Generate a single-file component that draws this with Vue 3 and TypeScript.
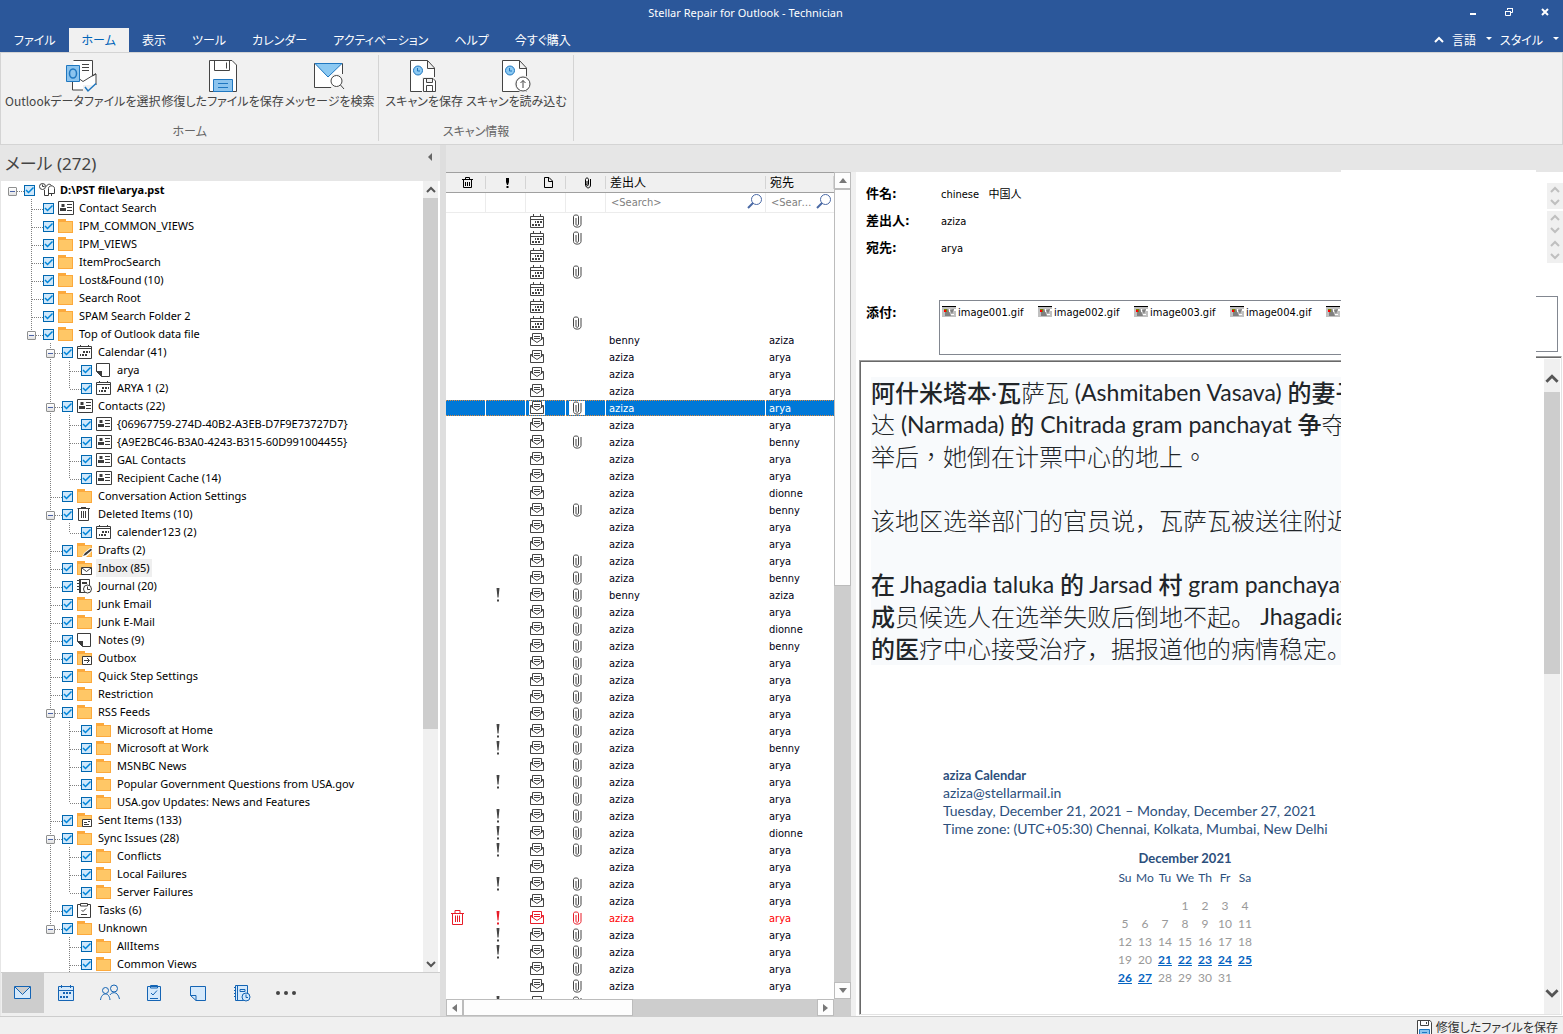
<script setup lang="ts">
import { ref } from 'vue'

interface TreeRow {
  depth: number
  icon: string
  label: string
  open?: boolean
  selected?: boolean
  more?: boolean
}

interface Mail {
  kind: 'cal' | 'env'
  from: string
  to: string
  clip: boolean
  bang: boolean
  deleted: boolean
}

interface Run {
  k: 'h' | 'l' | 't' | 'w'
  t: string
}

const tabs = ['ファイル', 'ホーム', '表示', 'ツール', 'カレンダー', 'アクティベーション', 'ヘルプ', '今すぐ購入']
const activeTab = ref('ホーム')

const groups = [
  {
    name: 'ホーム',
    actions: [
      { icon: 'r-outlook', label: 'Outlookデータファイルを選択' },
      { icon: 'r-floppy', label: '修復したファイルを保存' },
      { icon: 'r-search', label: 'メッセージを検索' },
    ],
  },
  {
    name: 'スキャン情報',
    actions: [
      { icon: 'r-scan-save', label: 'スキャンを保存' },
      { icon: 'r-scan-load', label: 'スキャンを読み込む' },
    ],
  },
]

const f = (depth: number, label: string, icon = 'folder', extra: Partial<TreeRow> = {}): TreeRow => ({
  depth,
  label,
  icon,
  ...extra,
})

const tree: TreeRow[] = [
  f(0, 'D:\\PST file\\arya.pst', 'pst', { open: true }),
  f(1, 'Contact Search', 'card'),
  f(1, 'IPM_COMMON_VIEWS'),
  f(1, 'IPM_VIEWS'),
  f(1, 'ItemProcSearch'),
  f(1, 'Lost&Found (10)'),
  f(1, 'Search Root'),
  f(1, 'SPAM Search Folder 2'),
  f(1, 'Top of Outlook data file', 'folder', { open: true }),
  f(2, 'Calendar (41)', 'calendar', { open: true }),
  f(3, 'arya', 'note'),
  f(3, 'ARYA 1 (2)', 'calendar'),
  f(2, 'Contacts (22)', 'card', { open: true }),
  f(3, '{06967759-274D-40B2-A3EB-D7F9E73727D7}', 'card'),
  f(3, '{A9E2BC46-B3A0-4243-B315-60D991004455}', 'card'),
  f(3, 'GAL Contacts', 'card'),
  f(3, 'Recipient Cache (14)', 'card'),
  f(2, 'Conversation Action Settings'),
  f(2, 'Deleted Items (10)', 'bin', { open: true }),
  f(3, 'calender123 (2)', 'calendar'),
  f(2, 'Drafts (2)', 'drafts'),
  f(2, 'Inbox (85)', 'inbox', { selected: true }),
  f(2, 'Journal (20)', 'journal'),
  f(2, 'Junk Email'),
  f(2, 'Junk E-Mail'),
  f(2, 'Notes (9)', 'note'),
  f(2, 'Outbox', 'outbox'),
  f(2, 'Quick Step Settings'),
  f(2, 'Restriction'),
  f(2, 'RSS Feeds', 'folder', { open: true }),
  f(3, 'Microsoft at Home'),
  f(3, 'Microsoft at Work'),
  f(3, 'MSNBC News'),
  f(3, 'Popular Government Questions from USA.gov'),
  f(3, 'USA.gov Updates: News and Features'),
  f(2, 'Sent Items (133)', 'sent'),
  f(2, 'Sync Issues (28)', 'folder', { open: true }),
  f(3, 'Conflicts'),
  f(3, 'Local Failures'),
  f(3, 'Server Failures'),
  f(2, 'Tasks (6)', 'task'),
  f(2, 'Unknown', 'folder', { open: true }),
  f(3, 'AllItems'),
  f(3, 'Common Views', 'folder', { more: true }),
]

// A guide line continues below row i at the given depth while a later sibling exists.
function continues(i: number, depth: number): boolean {
  for (let j = i + 1; j < tree.length; j++) {
    if (tree[j].depth < depth) return false
    if (tree[j].depth === depth) return true
  }
  return !!tree[i].more && tree[i].depth === depth
}

// Each entry: kind, marks (c = attachment, ! = important, d = deleted), sender, recipient.
const mailRows = `cal|c||
cal|c||
cal|||
cal|c||
cal|||
cal|||
cal|c||
env||benny|aziza
env||aziza|arya
env||aziza|arya
env||aziza|arya
env|c|aziza|arya
env||aziza|arya
env|c|aziza|benny
env||aziza|arya
env||aziza|arya
env||aziza|dionne
env|c|aziza|benny
env||aziza|arya
env||aziza|arya
env|c|aziza|arya
env|c|aziza|benny
env|!c|benny|aziza
env|c|aziza|arya
env|c|aziza|dionne
env|c|aziza|benny
env|c|aziza|arya
env|c|aziza|arya
env|c|aziza|arya
env|c|aziza|arya
env|!c|aziza|arya
env|!c|aziza|benny
env|c|aziza|arya
env|!c|aziza|arya
env|c|aziza|arya
env|!c|aziza|arya
env|!c|aziza|dionne
env|!c|aziza|arya
env||aziza|arya
env|!c|aziza|arya
env|c|aziza|arya
env|d!c|aziza|arya
env|!c|aziza|arya
env|!c|aziza|arya
env|c|aziza|arya
env|c|aziza|arya
env|!c||`

const mails: Mail[] = mailRows.split('\n').map((line) => {
  const [kind, marks, from, to] = line.split('|')
  return {
    kind: kind as Mail['kind'],
    from,
    to,
    clip: marks.includes('c'),
    bang: marks.includes('!'),
    deleted: marks.includes('d'),
  }
})
const selectedMail = ref(11)

const fields = [
  { label: '件名', value: 'chinese   中国人' },
  { label: '差出人', value: 'aziza' },
  { label: '宛先', value: 'arya' },
]
const attachments = ['image001.gif', 'image002.gif', 'image003.gif', 'image004.gif', '']

// h = heavy Han, l = light Han, t = light Han with centred punctuation, w = Latin
const lines: Run[][] = [
  [
    { k: 'h', t: '阿什米塔本' },
    { k: 'w', t: '·' },
    { k: 'h', t: '瓦' },
    { k: 'l', t: '萨瓦' },
    { k: 'w', t: ' (Ashmitaben Vasava) ' },
    { k: 'h', t: '的妻子' },
  ],
  [
    { k: 'l', t: '达' },
    { k: 'w', t: ' (Narmada) ' },
    { k: 'h', t: '的' },
    { k: 'w', t: ' Chitrada gram panchayat ' },
    { k: 'h', t: '争' },
    { k: 'l', t: '夺' },
  ],
  [{ k: 't', t: '举后，她倒在计票中心的地上。' }],
  [],
  [{ k: 'l', t: '该地区选举部门的官员说，瓦萨瓦被送往附近' }],
  [],
  [
    { k: 'h', t: '在' },
    { k: 'w', t: ' Jhagadia taluka ' },
    { k: 'h', t: '的' },
    { k: 'w', t: ' Jarsad ' },
    { k: 'h', t: '村' },
    { k: 'w', t: ' gram panchayat' },
  ],
  [
    { k: 'h', t: '成' },
    { k: 'l', t: '员候选人在选举失败后倒地不起。' },
    { k: 'w', t: ' Jhagadia' },
  ],
  [
    { k: 'h', t: '的医' },
    { k: 'l', t: '疗中心接受治疗，据报道他的病情稳定。' },
  ],
]

const weekdays = ['Su', 'Mo', 'Tu', 'We', 'Th', 'Fr', 'Sa']
const weeks = Array.from({ length: 5 }, (_, w) =>
  Array.from({ length: 7 }, (_, d) => {
    const n = w * 7 + d - 2
    return n >= 1 && n <= 31 ? n : 0
  }),
)
const isLinked = (n: number) => n >= 21 && n <= 27

const views = [
  { icon: 'n-mail', label: 'メール' },
  { icon: 'n-cal', label: '予定表' },
  { icon: 'n-people', label: '連絡先' },
  { icon: 'n-task', label: 'タスク' },
  { icon: 'n-note', label: 'メモ' },
  { icon: 'n-journal', label: '履歴' },
  { icon: 'n-more', label: 'その他' },
]
const activeView = ref('n-mail')
</script>

<template>
  <div class="app">
    <svg class="sprite" aria-hidden="true">
      <symbol id="folder" viewBox="0 0 16 16">
        <path d="M0 2V1H8V3H15V15H0Z" fill="#fca93c" />
        <path d="M1 4H14V14H1Z" fill="#ffc766" />
      </symbol>
      <symbol id="pst" viewBox="0 0 16 16">
        <g fill="none" stroke="#3b3b3b">
          <circle cx="3.5" cy="4.5" r="3" />
          <path d="M3.5 2.500V4.500H5.500" />
          <path d="M5.500 8V13.500H9.500V6.500C9.500 3 15.500 3 15.500 6.500V11.500H9.500M7.500 4.500C8 2 11 1.500 12.500 3.500M12.500 11.500V14" />
        </g>
      </symbol>
      <symbol id="card" viewBox="0 0 16 16">
        <path d="M.5 1.500H15.500V14.500H.5Z" fill="#fff" stroke="#3b3b3b" />
        <path d="M3.500 4h3v3h-3zM2 8h6v3H2zM9 4h5v1H9zM9 7h5v1H9zM9 10h5v1H9z" fill="#3b3b3b" />
      </symbol>
      <symbol id="calendar" viewBox="0 0 16 16">
        <path d="M.5 2.500H14.500V14.500H.5Z" fill="#fff" stroke="#3b3b3b" />
        <path d="M0 4h15v1H0zM3 1h1v2H3zM11 1h1v2h-1zM6 7h2v2H6zM9 7h2v2H9zM12 7h1v2h-1zM3 10h1v2H3zM5 10h2v2H5zM8 10h2v2H8z" fill="#3b3b3b" />
      </symbol>
      <symbol id="note" viewBox="0 0 16 16">
        <path d="M.5 1.500H13.500V14.500H5.500L.5 9.500Z" fill="#fff" stroke="#3b3b3b" />
        <path d="M0 9H6V15Z" fill="#3b3b3b" />
      </symbol>
      <symbol id="bin" viewBox="0 0 16 16">
        <path d="M1.500 3V14.500H11.500V3M.5 2.500H13M4 1.500H9" fill="none" stroke="#3b3b3b" />
        <path d="M4.500 5V12M6.500 5V12M8.500 5V12" stroke="#3b3b3b" />
      </symbol>
      <symbol id="drafts" viewBox="0 0 16 16">
        <path d="M0 1H8V3H15V15H0Z" fill="#fca93c" /><path d="M1 4H14V14H1Z" fill="#ffc766" />
        <path d="M5 15L7 11L13 6L15 6V9L9 15Z" fill="#fff" />
        <path d="M6 14L8 11L14 6.500L15 8L9 13Z" fill="#3b3b3b" />
      </symbol>
      <symbol id="inbox" viewBox="0 0 16 16">
        <path d="M0 1H8V3H15V15H0Z" fill="#fca93c" /><path d="M1 4H14V14H1Z" fill="#ffc766" />
        <path d="M4.500 7.500H14.500V14.500H4.500Z" fill="#fff" stroke="#3b3b3b" />
        <path d="M5 8L9.500 11.500L14 8" fill="none" stroke="#3b3b3b" />
      </symbol>
      <symbol id="outbox" viewBox="0 0 16 16">
        <path d="M0 1H8V3H15V15H0Z" fill="#fca93c" /><path d="M1 4H14V14H1Z" fill="#ffc766" />
        <path d="M5.500 6.500H14.500V14.500H5.500Z" fill="#fff" stroke="#3b3b3b" />
        <path d="M7 10.500H12M10 8L12.500 10.500L10 13" fill="none" stroke="#3b3b3b" />
      </symbol>
      <symbol id="sent" viewBox="0 0 16 16">
        <path d="M0 1H8V3H15V15H0Z" fill="#fca93c" /><path d="M1 4H14V14H1Z" fill="#ffc766" />
        <path d="M5.500 7.500H14.500V14.500H5.500Z" fill="#fff" stroke="#3b3b3b" />
        <path d="M7 10h3v1H7zM7 12h5v1H7zM11 9h2v1h-2z" fill="#3b3b3b" />
      </symbol>
      <symbol id="journal" viewBox="0 0 16 16">
        <path d="M2.500 1.500H12.500V14.500H2.500Z" fill="#fff" stroke="#3b3b3b" />
        <path d="M0 2h2v1H0zM0 5h2v1H0zM0 8h2v1H0zM0 11h2v1H0zM5 4h5v2H5zM2 1h2v14H2z" fill="#3b3b3b" />
        <circle cx="10.500" cy="11" r="4" fill="#fff" stroke="#3b3b3b" />
        <path d="M10.500 8.500V11.500H13" fill="none" stroke="#3b3b3b" />
      </symbol>
      <symbol id="task" viewBox="0 0 16 16">
        <path d="M.5 2.500H13.500V15.500H.5Z" fill="#fff" stroke="#3b3b3b" />
        <path d="M3.500 1.500H10.500V4H3.500Z" fill="#fff" stroke="#3b3b3b" />
        <path d="M4.500 8L6 9.500L9 6.500M4 12.500H10" fill="none" stroke="#3b3b3b" />
      </symbol>

      <symbol id="m-cal" viewBox="0 0 14 14">
        <path d="M.5 2.500H13.500V13.500H.5ZM1 5.500H13M3.500 0V3M10.500 0V3" fill="none" stroke="currentColor" />
        <path d="M5 7h1v2H5zM7 7h2v2H7zM10 7h2v2h-2zM2 10h2v2H2zM5 10h2v2H5zM8 10h2v2H8z" fill="currentColor" />
      </symbol>
      <symbol id="m-env" viewBox="0 0 14 14">
        <path d="M2.500 4.500H.5V12.500H13.500V4.500H11.500M2.500 7V.5H11.500V7M.5 5L7 9.500L13.500 5" fill="none" stroke="currentColor" />
        <path d="M4 3.500H10M4 5.500H10" stroke="currentColor" />
      </symbol>
      <symbol id="m-clip" viewBox="0 0 9 14">
        <path d="M3 4V10.500C3 11.500 5.500 11.500 5.500 10.500V2.500C5.500 .5 .5 .5 .5 2.500V10.500C.5 14 8 14 8 10.500V2" fill="none" stroke="currentColor" />
      </symbol>
      <symbol id="m-bang" viewBox="0 0 4 14">
        <path d="M.5 0H3.500L2.500 9.500H1.500Z" fill="currentColor" /><path d="M1 11.500h2v2H1z" fill="currentColor" />
      </symbol>
      <symbol id="m-bin" viewBox="0 0 14 16">
        <path d="M1.500 3V14.500H11.500V3M0 3.500H13M4 3V.5H9V3" fill="none" stroke="currentColor" />
        <path d="M4.500 5.500V12M6.500 5.500V12M8.500 5.500V12" stroke="currentColor" />
      </symbol>
      <symbol id="h-bin" viewBox="0 0 12 12">
        <path d="M1.500 3V10.500H9.500V3M0 2.500H11M3.500 2V.5H7.500V2M3.500 5V9M5.500 5V9M7.500 5V9" fill="none" stroke="#000" />
      </symbol>
      <symbol id="h-bang" viewBox="0 0 12 12"><path d="M4 1h3v4l-1 3H5L4 5zM4.500 9h2v2h-2z" /></symbol>
      <symbol id="h-doc" viewBox="0 0 12 12">
        <path d="M2.500 .5H7L10.500 4V10.500H2.500ZM6.500 1V4.500H10" fill="none" stroke="#000" />
      </symbol>
      <symbol id="h-clip" viewBox="0 0 12 12">
        <path d="M5 4V8M3.500 8V2.500C3.500 .5 6.500 .5 6.500 2.500V7.500C6.500 9 4.500 9 4.500 7.500M3.500 7C3.500 12 8.500 12 8.500 8V2" fill="none" stroke="#000" />
      </symbol>
      <symbol id="lens" viewBox="0 0 16 16">
        <circle cx="9.500" cy="5.500" r="5" fill="none" stroke="#4a69a5" />
        <path d="M6 9L1 14" stroke="#4a69a5" stroke-width="2" />
      </symbol>
      <symbol id="gif" viewBox="0 0 14 11">
        <path d="M0 0h14v11H0z" fill="#c0c0c0" /><path d="M0 0h14v1H0z" />
        <path d="M3 4L6 3L9 10H3Z" fill="#808080" /><path d="M8 4L12 3L10 8Z" fill="#808080" />
        <path d="M7 3h1v3H7zM12 3h2v2h-2zM9 8h3v1H9z" fill="#fff" />
        <path d="M2 3h3v3H2z" fill="#808000" /><path d="M2 4h2v2H2z" fill="#f00" />
      </symbol>

      <symbol id="r-outlook" viewBox="0 0 34 34">
        <path d="M7.500 1.500H26.500V17L30 15V31H6.500V20" fill="#fff" stroke="#444" />
        <path d="M6.500 15L17 22.500L30 14.500" fill="none" stroke="#444" />
        <path d="M16 5.500H23M16 8.500H23M16 11.500H23" stroke="#444" />
        <path d="M.5 6.500H13.500V22.500H.5Z" fill="#8cc4ee" stroke="#1f77c0" />
        <ellipse cx="7" cy="14.500" rx="3.500" ry="4.500" fill="none" stroke="#1f77c0" stroke-width="1.500" />
        <path d="M17 26H31V34H17Z" fill="#f1f1f1" />
        <path d="M19 28L22 32L30 24.500" fill="none" stroke="#1f77c0" stroke-width="1.500" />
      </symbol>
      <symbol id="r-floppy" viewBox="0 0 34 34">
        <path d="M3.500 1.500H26L30.500 6V32.500H3.500Z" fill="#fff" stroke="#444" />
        <path d="M8.500 1.500V11.500H23.500V1.500M20.500 3.500V9.500" fill="none" stroke="#444" />
        <path d="M7.500 20.500H26.500V32.500H7.500Z" fill="#8cc4ee" stroke="#1f77c0" />
        <path d="M12 24.500H22M12 28.500H22" stroke="#1f77c0" />
      </symbol>
      <symbol id="s-floppy" viewBox="0 0 16 16">
        <path d="M.5 .5H13L14.500 2.500V15.500H.5Z" fill="#fff" stroke="#444" />
        <path d="M3.500 1V5.500H11.500V1M9.500 2V4" fill="none" stroke="#444" />
        <path d="M2.500 9.500H12.500V16H2.500Z" fill="#8cc4ee" stroke="#1f77c0" />
        <path d="M5 12.500H10" stroke="#1f77c0" />
      </symbol>
      <symbol id="r-search" viewBox="0 0 34 34">
        <path d="M1.500 4.500H29.500V28.500H1.500Z" fill="#fff" stroke="#444" />
        <path d="M2 4.500H29L15 18Z" fill="#8cc9f2" stroke="#1f77c0" />
        <path d="M19 15H31V31H18Z" fill="#f1f1f1" />
        <circle cx="23.500" cy="22" r="5.500" fill="#fff" stroke="#444" />
        <path d="M27.500 26L31 30" stroke="#444" />
      </symbol>
      <symbol id="r-scan-save" viewBox="0 0 34 34">
        <path d="M3.500 1.500H20.500L27.500 9V32.500H3.500ZM20.500 1.500V9.500H27.500" fill="#fff" stroke="#444" />
        <circle cx="11" cy="11.500" r="4.500" fill="#8cc9f2" stroke="#1f77c0" />
        <path d="M10.500 9V12H13" fill="none" stroke="#1f77c0" />
        <path d="M15 18H31V34H15Z" fill="#f1f1f1" />
        <path d="M16.500 19.500H26L28.500 22V32.500H16.500ZM19.500 19.500V23.500H25.500V19.500M19.500 32.500V26.500H25.500V32.500" fill="#fff" stroke="#444" />
      </symbol>
      <symbol id="r-scan-load" viewBox="0 0 34 34">
        <path d="M3.500 1.500H20.500L27.500 9V32.500H3.500ZM20.500 1.500V9.500H27.500" fill="#fff" stroke="#444" />
        <circle cx="11" cy="11.500" r="4.500" fill="#8cc9f2" stroke="#1f77c0" />
        <path d="M10.500 9V12H13" fill="none" stroke="#1f77c0" />
        <circle cx="24" cy="25" r="8.500" fill="#f1f1f1" />
        <circle cx="24" cy="25" r="7" fill="#fff" stroke="#444" />
        <path d="M24 29V21.500M21.500 24L24 21.500L26.500 24" fill="none" stroke="#444" />
      </symbol>

      <symbol id="n-mail" viewBox="0 0 20 18">
        <path d="M1.500 2.500H17.500V14.500H1.500ZM2 3L9.500 10.500L17 3" fill="#d5e9fb" stroke="#1464b4" />
      </symbol>
      <symbol id="n-cal" viewBox="0 0 20 18">
        <path d="M2.500 2.500H17.500V16.500H2.500ZM3 6.500H17M5.500 1V4M14.500 1V4" fill="#d5e9fb" stroke="#1464b4" />
        <path d="M7 8h2v2H7zM10 8h2v2h-2zM13 8h2v2h-2zM4 12h2v2H4zM7 12h2v2H7zM10 12h2v2h-2z" fill="#1464b4" />
      </symbol>
      <symbol id="n-people" viewBox="0 0 20 18">
        <g fill="none" stroke="#1464b4">
          <circle cx="5.500" cy="6.500" r="3" /><circle cx="14" cy="4.500" r="3.500" />
          <path d="M.5 16C1 12 3 10 5.500 10S9.500 12 10 16M10 11C11 8.500 17.500 6 19.500 15" />
        </g>
      </symbol>
      <symbol id="n-task" viewBox="0 0 20 18">
        <path d="M3.500 2.500H16.500V16.500H3.500Z" fill="#d5e9fb" stroke="#1464b4" />
        <path d="M6.500 1.500H13.500V4H6.500ZM7 9L9 11L13 6.500M6 14.500H14" fill="none" stroke="#1464b4" />
      </symbol>
      <symbol id="n-note" viewBox="0 0 20 18">
        <path d="M2.500 2.500H17.500V16.500H8L2.500 11.500Z" fill="#d5e9fb" stroke="#1464b4" />
        <path d="M2.500 11.500H8V16.500" fill="none" stroke="#1464b4" />
      </symbol>
      <symbol id="n-journal" viewBox="0 0 20 18">
        <path d="M3.500 1.500H15.500V16.500H3.500ZM5.500 2V16" fill="#d5e9fb" stroke="#1464b4" />
        <path d="M2 3.500H4M2 6.500H4M2 9.500H4M2 12.500H4M8 5.500H13V7.500H8Z" fill="none" stroke="#1464b4" />
        <circle cx="14" cy="13" r="4" fill="#d5e9fb" stroke="#1464b4" />
        <path d="M14 10.500V13.500H16" fill="none" stroke="#1464b4" />
      </symbol>
      <symbol id="n-more" viewBox="0 0 20 18">
        <circle cx="2" cy="9" r="2" fill="#444" /><circle cx="10" cy="9" r="2" fill="#444" /><circle cx="18" cy="9" r="2" fill="#444" />
      </symbol>

      <symbol id="chev-up" viewBox="0 0 10 8"><path d="M1 6L5 2L9 6" fill="none" stroke="currentColor" stroke-width="2" /></symbol>
      <symbol id="chev-down" viewBox="0 0 10 8"><path d="M1 2L5 6L9 2" fill="none" stroke="currentColor" stroke-width="2" /></symbol>
    </svg>

    <header class="titlebar">
      <h1>Stellar Repair for Outlook - Technician</h1>
      <button class="win" aria-label="最小化">
        <svg width="10" height="10"><path d="M2 6h6v2H2z" fill="#fff" /></svg>
      </button>
      <button class="win" aria-label="元に戻す">
        <svg width="10" height="10">
          <path d="M3.500 3V1.500H8.500V5.500H7M1.500 4.500H6.500V8.500H1.500ZM3 1.500H9M1 4.500H7" fill="none" stroke="#fff" />
        </svg>
      </button>
      <button class="win" aria-label="閉じる">
        <svg width="10" height="10"><path d="M2 2L8 8M8 2L2 8" stroke="#fff" stroke-width="2" /></svg>
      </button>
    </header>

    <nav class="tabs">
      <button
        v-for="tab in tabs"
        :key="tab"
        class="tab"
        :class="{ active: tab === activeTab }"
        @click="activeTab = tab"
      >{{ tab }}</button>
      <div class="tab-tools">
        <button class="tool" aria-label="リボンを折りたたむ">
          <svg width="10" height="8"><use href="#chev-up" /></svg>
        </button>
        <button class="tool">言語<i class="caret"></i></button>
        <button class="tool">スタイル<i class="caret"></i></button>
      </div>
    </nav>

    <section class="ribbon">
      <div v-for="g in groups" :key="g.name" class="group">
        <div class="actions">
          <button v-for="a in g.actions" :key="a.label" class="action">
            <svg width="34" height="34"><use :href="'#' + a.icon" /></svg>
            <span>{{ a.label }}</span>
          </button>
        </div>
        <p class="group-name">{{ g.name }}</p>
      </div>
    </section>

    <main class="workspace">
      <aside class="folders">
        <div class="folders-head">
          <h2>メール (272)</h2>
          <button class="collapse" aria-label="折りたたむ"></button>
        </div>
        <div class="tree-wrap">
          <ul class="tree">
            <li v-for="(row, i) in tree" :key="i" class="node">
              <span
                v-for="d in row.depth"
                :key="d"
                class="guide"
                :class="{ line: d > 1 && continues(i, d - 1) }"
              ></span>
              <span class="guide elbow" :class="{ line: row.depth > 0, last: !continues(i, row.depth) }">
                <button v-if="row.open" class="minus" aria-label="折りたたむ"></button>
              </span>
              <label class="node-label" :class="{ root: row.depth === 0 }">
                <input type="checkbox" class="check" checked />
                <svg width="16" height="16"><use :href="'#' + row.icon" /></svg>
                <span class="name" :class="{ selected: row.selected }">{{ row.label }}</span>
              </label>
            </li>
          </ul>
          <div class="thin-scroll tree-scroll">
            <svg width="10" height="8"><use href="#chev-up" /></svg>
            <div class="track"><i></i></div>
            <svg width="10" height="8"><use href="#chev-down" /></svg>
          </div>
        </div>
        <nav class="views">
          <button
            v-for="v in views"
            :key="v.icon"
            class="view"
            :class="{ active: v.icon === activeView }"
            :aria-label="v.label"
            @click="activeView = v.icon"
          >
            <svg width="20" height="18"><use :href="'#' + v.icon" /></svg>
          </button>
        </nav>
      </aside>

      <section class="list">
        <div class="list-main">
          <div class="list-view">
            <table class="mails">
              <colgroup>
                <col class="c-icon" /><col class="c-icon" /><col class="c-icon" /><col class="c-icon" />
                <col class="c-from" /><col class="c-to" />
              </colgroup>
              <thead>
                <tr class="heads">
                  <th class="mark"><svg width="12" height="12"><use href="#h-bin" /></svg></th>
                  <th class="mark"><svg width="12" height="12"><use href="#h-bang" /></svg></th>
                  <th class="mark"><svg width="12" height="12"><use href="#h-doc" /></svg></th>
                  <th class="mark"><svg width="12" height="12"><use href="#h-clip" /></svg></th>
                  <th>差出人</th>
                  <th>宛先</th>
                </tr>
                <tr class="filters">
                  <td></td>
                  <td></td>
                  <td></td>
                  <td></td>
                  <td>
                    <div class="filter">
                      <input type="text" placeholder="<Search>" aria-label="差出人" />
                      <svg width="16" height="16"><use href="#lens" /></svg>
                    </div>
                  </td>
                  <td>
                    <div class="filter">
                      <input type="text" placeholder="<Search>" aria-label="宛先" />
                      <svg width="16" height="16"><use href="#lens" /></svg>
                    </div>
                  </td>
                </tr>
              </thead>
              <tbody>
                <tr
                  v-for="(m, i) in mails"
                  :key="i"
                  :class="{ selected: i === selectedMail, deleted: m.deleted }"
                  @click="selectedMail = i"
                >
                  <td><svg v-if="m.deleted" class="i-bin" width="14" height="16"><use href="#m-bin" /></svg></td>
                  <td><svg v-if="m.bang" class="i-bang" width="4" height="14"><use href="#m-bang" /></svg></td>
                  <td><span class="box"><svg width="14" height="14"><use :href="'#m-' + m.kind" /></svg></span></td>
                  <td>
                    <span v-if="m.clip" class="box"><svg width="9" height="14"><use href="#m-clip" /></svg></span>
                  </td>
                  <td>{{ m.from }}</td>
                  <td>{{ m.to }}</td>
                </tr>
              </tbody>
            </table>
          </div>
          <div class="vbar">
            <button class="bar-btn" aria-label="上へ"><i class="tri up"></i></button>
            <div class="bar-track"><i class="bar-thumb"></i></div>
            <button class="bar-btn" aria-label="下へ"><i class="tri down"></i></button>
          </div>
        </div>
        <div class="hbar">
          <button class="bar-btn" aria-label="左へ"><i class="tri left"></i></button>
          <div class="bar-track"><i class="bar-thumb"></i></div>
          <button class="bar-btn" aria-label="右へ"><i class="tri right"></i></button>
        </div>
      </section>

      <article class="reader">
        <div class="message">
          <dl class="fields">
            <div v-for="fl in fields" :key="fl.label" class="field">
              <dt>{{ fl.label }}:</dt>
              <dd>{{ fl.value }}</dd>
            </div>
          </dl>
          <div class="attach">
            <strong>添付:</strong>
            <ul class="files">
              <li v-for="a in attachments" :key="a">
                <svg width="14" height="11"><use href="#gif" /></svg>{{ a }}
              </li>
            </ul>
          </div>
          <div class="body">
            <div class="story">
              <p v-for="(line, i) in lines" :key="i">
                <span v-for="(r, j) in line" :key="j" :class="r.k">{{ r.t }}</span>
              </p>
            </div>
            <div class="share">
              <strong>aziza Calendar</strong>
              <p>aziza@stellarmail.in</p>
              <p>Tuesday, December 21, 2021 – Monday, December 27, 2021</p>
              <p>Time zone: (UTC+05:30) Chennai, Kolkata, Mumbai, New Delhi</p>
              <table class="month">
                <caption>December 2021</caption>
                <thead>
                  <tr><th v-for="d in weekdays" :key="d">{{ d }}</th></tr>
                </thead>
                <tbody>
                  <tr v-for="(w, i) in weeks" :key="i">
                    <td v-for="(n, j) in w" :key="j">
                      <a v-if="isLinked(n)" href="#">{{ n }}</a>
                      <template v-else-if="n">{{ n }}</template>
                    </td>
                  </tr>
                </tbody>
              </table>
            </div>
          </div>
        </div>
        <div class="blank"></div>
        <div class="edge">
          <div class="spins">
            <div v-for="n in 3" :key="n" class="spin">
              <svg width="10" height="8"><use href="#chev-up" /></svg>
              <svg width="10" height="8"><use href="#chev-down" /></svg>
            </div>
          </div>
          <div class="files-end"></div>
          <div class="body-end">
            <div class="thin-scroll body-scroll">
              <svg width="14" height="12"><use href="#chev-up" /></svg>
              <div class="track"><i></i></div>
              <svg width="14" height="12"><use href="#chev-down" /></svg>
            </div>
          </div>
        </div>
      </article>
    </main>

    <footer class="status">
      <button class="save">
        <svg width="16" height="16"><use href="#s-floppy" /></svg>修復したファイルを保存
      </button>
    </footer>
  </div>
</template>

<style>
body {
  margin: 0;
  background: #f0f0f0;
}
</style>

<style scoped>
.app {
  display: flex;
  flex-direction: column;
  height: 100vh;
  overflow: hidden;
  font: 12px/18px 'Noto Sans', 'Noto Sans CJK JP', sans-serif;
  font-feature-settings: 'palt';
  color: #000;
}
.sprite {
  position: absolute;
  width: 0;
  height: 0;
}
button,
input {
  font: inherit;
  font-feature-settings: inherit;
  color: inherit;
  margin: 0;
  padding: 0;
  border: 0;
  background: none;
}
svg {
  display: block;
  flex: none;
}
h1,
h2,
p,
ul,
dl,
dd {
  margin: 0;
  padding: 0;
  font-weight: 400;
  list-style: none;
}

.titlebar {
  display: flex;
  flex: none;
  height: 28px;
  padding-left: 36px;
  background: #2b579a;
  color: #fff;
}
.titlebar h1 {
  flex: 1;
  font-size: 11px;
  line-height: 26px;
  text-align: center;
}
.win {
  display: flex;
  width: 36px;
  height: 24px;
  align-items: center;
  justify-content: center;
}
.tabs {
  display: flex;
  flex: none;
  height: 24px;
  padding-left: 1px;
  background: #2b579a;
  color: #fff;
  font-family: 'Noto Sans CJK JP', sans-serif;
}
.tab {
  padding: 0 13px;
  line-height: 22px;
  white-space: nowrap;
}
.tab.active {
  background: #f1f1f1;
  color: #0063b8;
}
.tab-tools {
  display: flex;
  margin-left: auto;
  gap: 8px;
  padding-right: 4px;
}
.tool {
  display: flex;
  align-items: center;
  gap: 10px;
}
.caret {
  width: 0;
  margin-bottom: 4px;
  border: 3px solid transparent;
  border-top-color: #fff;
  border-bottom: 0;
}

.ribbon {
  display: flex;
  flex: none;
  box-sizing: border-box;
  height: 93px;
  border: 1px solid #d4d4d4;
  background: #f1f1f1;
  color: #444;
  font-family: 'Noto Sans CJK JP', sans-serif;
}
.group {
  display: flex;
  flex-direction: column;
  margin: 2px 0 3px;
  border-right: 1px solid #d4d4d4;
}
.actions {
  display: flex;
  gap: 1px;
  padding: 4px 4px 0;
}
.group:nth-child(2) .actions {
  gap: 3px;
  padding: 4px 6px 0;
}
.action {
  display: flex;
  flex-direction: column;
  align-items: center;
  line-height: 16px;
  white-space: nowrap;
}
.group-name {
  margin-top: 12px;
  line-height: 20px;
  color: #666;
  text-align: center;
}

.workspace {
  display: flex;
  flex: 1;
  min-height: 0;
  background: #e6e6e6;
}
.folders {
  display: flex;
  flex: none;
  flex-direction: column;
  box-sizing: border-box;
  width: 446px;
  border-right: 6px solid #dedede;
  border-left: 1px solid #e6e6e6;
}
.folders-head {
  display: flex;
  flex: none;
  height: 36px;
  justify-content: space-between;
  padding: 0 8px 0 4px;
}
.folders-head h2 {
  font-size: 17px;
  line-height: 38px;
  color: #444;
}
.collapse {
  align-self: flex-start;
  margin-top: 8px;
  border: 4px solid transparent;
  border-right-color: #666;
  border-left: 0;
}
.tree-wrap {
  display: flex;
  flex: 1;
  min-height: 0;
  background: #fff;
}
.tree {
  flex: 1;
  overflow: hidden;
  padding-left: 2px;
  font-size: 11px;
}
.node {
  display: flex;
  height: 18px;
}
.guide {
  position: relative;
  width: 19px;
  flex: none;
}
.guide.line::before {
  content: '';
  position: absolute;
  top: 0;
  bottom: 0;
  left: 9px;
  width: 1px;
  background: repeating-linear-gradient(#808080 0 1px, transparent 1px 2px);
}
.guide.elbow.last::before {
  bottom: 8px;
}
.guide.elbow::after {
  content: '';
  position: absolute;
  top: 10px;
  left: 10px;
  right: -2px;
  height: 1px;
  background: repeating-linear-gradient(90deg, #808080 0 1px, transparent 1px 2px);
}
.minus {
  position: absolute;
  z-index: 1;
  top: 6px;
  left: 5px;
  width: 9px;
  height: 9px;
  border: 1px solid #8e8f8f;
  border-radius: 1px;
  background: linear-gradient(#4b63a7, #4b63a7) center / 5px 1px no-repeat, linear-gradient(#fff, #e2e2e2);
}
.node-label {
  display: flex;
  padding-left: 2px;
  white-space: nowrap;
}
.node-label.root {
  font-weight: 700;
}
.check {
  appearance: none;
  flex: none;
  width: 11px;
  height: 11px;
  margin: 4px 4px 0 0;
  border: 1px solid #0067b0;
  background: #cfe8fb;
}
.check:checked {
  background: #cfe8fb
    url("data:image/svg+xml,%3Csvg xmlns='http://www.w3.org/2000/svg' viewBox='0 0 9 9'%3E%3Cpath d='M1 4L3.500 6.500L8.500 1.500' fill='none' stroke='%230084d8' stroke-width='1.500'/%3E%3C/svg%3E");
}
.node-label svg {
  margin-top: 1px;
}
.name {
  padding: 0 2px;
  margin-left: 3px;
}
.name.selected {
  background: #efefef;
}

.thin-scroll {
  display: flex;
  flex: none;
  flex-direction: column;
  align-items: center;
  width: 16px;
  background: #f0f0f0;
  color: #555;
}
.thin-scroll .track {
  flex: 1;
  align-self: stretch;
  margin: 5px 0;
}
.thin-scroll .track i {
  display: block;
  background: #cdcdcd;
}
.tree-scroll {
  width: 15px;
  margin-right: 2px;
  padding: 5px 0 4px;
}
.tree-scroll .track {
  margin: 4px 0;
}
.tree-scroll .track i {
  height: 70%;
}

.views {
  display: flex;
  flex: none;
  box-sizing: border-box;
  height: 44px;
  padding: 0 1px 3px;
  border-top: 1px solid #cdcdcd;
  background: #efefef;
}
.view {
  display: flex;
  width: 44px;
  align-items: center;
  justify-content: center;
}
.view.active {
  width: 42px;
  background: #cdcdcd;
}

.list {
  display: flex;
  flex: none;
  flex-direction: column;
  width: 405px;
  margin-top: 27px;
  font-family: 'DejaVu Sans Condensed', 'Noto Sans CJK JP', sans-serif;
  font-size: 11px;
}
.list-main {
  display: flex;
  flex: 1;
  min-height: 0;
}
.list-view {
  flex: 1;
  overflow: hidden;
  background: #fff;
}
.mails {
  width: 100%;
  table-layout: fixed;
  border-collapse: separate;
  border-spacing: 0;
}
.c-icon {
  width: 40px;
}
.c-from {
  width: 160px;
}
.mails th,
.mails td {
  box-sizing: border-box;
  height: 17px;
  padding: 0 0 0 3px;
  line-height: 15px;
  text-align: left;
  font-weight: 400;
}
.mails .heads th {
  height: 21px;
  padding-left: 4px;
  border-top: 1px solid #a0a0a0;
  border-bottom: 1px solid #a0a0a0;
  background: linear-gradient(#d4d4d4, #d4d4d4) right / 1px 13px no-repeat #f0f0f0;
  font-size: 12px;
  line-height: 18px;
}
.mails .heads .mark svg {
  margin: 0 auto;
}
.mails .filters td {
  height: 20px;
  padding: 0;
  border-right: 1px solid #ececec;
  border-bottom: 1px solid #ececec;
}
.mails tr > :last-child {
  border-right: 0;
}
.filter {
  display: flex;
  align-items: center;
  padding: 0 2px 1px 5px;
}
.filter input {
  flex: 1;
  min-width: 0;
  height: 16px;
  text-overflow: ellipsis;
}
.filter input::placeholder {
  color: #808080;
}
.mails tbody td {
  border-right: 1px solid #fff;
  border-bottom: 1px solid #fff;
  color: #001;
}
.mails tbody svg {
  color: #444;
}
.box {
  display: flex;
  width: 16px;
  height: 14px;
  justify-content: center;
}
.i-bin {
  margin-left: 2px;
}
.i-bang {
  margin-left: 7px;
}
.mails tr.deleted td {
  color: #f00;
}
.mails tr.deleted svg {
  color: #e81c28;
}
.mails tr.selected td {
  background: repeating-linear-gradient(90deg, #e08a3c 0 1px, #0078d7 1px 2px) top / 100% 1px no-repeat,
    repeating-linear-gradient(90deg, #e08a3c 0 1px, #0078d7 1px 2px) bottom / 100% 1px no-repeat,
    #0078d7;
  background-clip: padding-box;
  color: #fff;
}
.mails tr.selected .box {
  background: #fff;
}
.vbar {
  display: flex;
  width: 17px;
  flex-direction: column;
}
.hbar {
  display: flex;
  height: 17px;
  padding-right: 17px;
  background: #cdcdcd;
}
.bar-btn {
  display: flex;
  flex: none;
  box-sizing: border-box;
  width: 17px;
  height: 17px;
  align-items: center;
  justify-content: center;
  border: 1px solid #bcbcbc;
  background: #fdfdfd;
}
.bar-track {
  display: flex;
  flex: 1;
  background: #cdcdcd;
}
.bar-thumb {
  box-sizing: border-box;
  border: 1px solid #bcbcbc;
  background: #fdfdfd;
}
.vbar .bar-thumb {
  width: 17px;
  height: 50%;
}
.hbar .bar-thumb {
  width: 48%;
}
.tri {
  border: 4px solid transparent;
}
.tri.up {
  border-top: 0;
  border-bottom: 5px solid #777;
}
.tri.down {
  border-bottom: 0;
  border-top: 5px solid #777;
}
.tri.left {
  border-left: 0;
  border-right: 5px solid #777;
}
.tri.right {
  border-right: 0;
  border-left: 5px solid #777;
}

.reader {
  display: flex;
  flex: 1;
  min-width: 0;
  margin-top: 27px;
  border-left: 5px solid #f0f0f0;
  background: #fff;
  font-family: 'DejaVu Sans Condensed', 'Noto Sans CJK JP', sans-serif;
}
.message {
  display: flex;
  flex: 1;
  min-width: 0;
  flex-direction: column;
  overflow: hidden;
}
.fields {
  height: 128px;
  box-sizing: border-box;
  padding: 12px 0 0 10px;
}
.field {
  display: flex;
  height: 27px;
  line-height: 20px;
}
.field dt,
.attach strong {
  width: 75px;
  flex: none;
  font-weight: 700;
  font-size: 13px;
}
.field dd {
  font-size: 11px;
  line-height: 21px;
  white-space: pre;
}
.attach {
  display: flex;
  height: 55px;
  flex: none;
  padding-left: 10px;
}
.attach strong {
  width: 73px;
  line-height: 26px;
}
.files {
  display: flex;
  flex: none;
  width: 600px;
  border: 1px solid #828790;
  line-height: 14px;
}
.files li {
  display: flex;
  width: 96px;
  flex: none;
  padding-top: 5px;
  font-size: 11px;
  gap: 2px;
}
.files li svg {
  margin-left: 2px;
}
.body {
  flex: 1;
  min-height: 0;
  margin: 5px 0 1px 3px;
  border: 1px solid #a0a0a0;
  border-right: 0;
  border-bottom-color: #e3e3e3;
  box-shadow: inset 1px 1px #696969;
  padding: 16px 0 0 11px;
  overflow: hidden;
}
.story {
  background: #f8fafc;
  color: #212529;
}
.story p {
  display: flex;
  height: 32px;
  font-size: 24px;
  line-height: 30px;
  white-space: pre;
  font-feature-settings: normal;
}
.story .h {
  font-family: 'Noto Sans CJK SC', sans-serif;
  font-weight: 500;
}
.story .l {
  font-family: 'Noto Sans CJK SC', sans-serif;
  font-weight: 300;
}
.story .t {
  font-family: 'Noto Sans CJK TC', sans-serif;
  font-weight: 300;
}
.story .w {
  font-family: Lato, sans-serif;
  font-size: 23px;
}
.share {
  padding: 101px 0 0 72px;
  font-family: Lato, sans-serif;
  font-size: 14px;
  color: #2c4f7c;
  white-space: nowrap;
}
.share strong {
  display: block;
  font-size: 13px;
}
.month {
  width: 140px;
  margin: 8px 0 0 172px;
  table-layout: fixed;
  border-collapse: collapse;
  font-size: 12px;
}
.month caption {
  padding-bottom: 2px;
  line-height: 24px;
  font-weight: 700;
  font-size: 13px;
}
.month th,
.month td {
  height: 18px;
  padding: 0;
  line-height: 18px;
  text-align: center;
  font-weight: 400;
}
.month th {
  height: 25px;
  vertical-align: top;
  line-height: 12px;
}
.month td {
  color: #999;
}
.month a {
  color: #0563c1;
  font-weight: 700;
}
.blank {
  width: 195px;
  flex: none;
  margin: -2px 0 1px;
  background: #fff;
  border-bottom: 1px solid #e3e3e3;
}
.edge {
  display: flex;
  width: 27px;
  flex: none;
  flex-direction: column;
}
.spins {
  height: 124px;
  padding: 11px 0 0 11px;
  box-sizing: border-box;
}
.spin {
  display: flex;
  height: 26px;
  flex-direction: column;
  align-items: center;
  justify-content: space-evenly;
  background: #f0f0f0;
  color: #bfbfbf;
}
.spin:first-child {
  margin-bottom: 2px;
}
.files-end {
  height: 54px;
  flex: none;
  margin-right: 5px;
  border: 1px solid #828790;
  border-left: 0;
}
.body-end {
  display: flex;
  flex: 1;
  min-height: 0;
  margin: 4px 1px 1px 0;
  border: 1px solid #e3e3e3;
  border-left: 0;
  border-top-color: #a0a0a0;
  box-shadow: inset 0 1px #696969;
  padding: 2px 0 0 8px;
}
.body-scroll {
  padding: 14px 0 15px;
}
.body-scroll .track {
  margin: 7px 0;
}
.body-scroll .track i {
  height: 48%;
}

.status {
  display: flex;
  flex: none;
  box-sizing: border-box;
  height: 18px;
  justify-content: flex-end;
  padding-right: 5px;
  border-top: 1px solid #cdcdcd;
  background: #f0f0f0;
  overflow: hidden;
}
.save {
  display: flex;
  height: 22px;
  align-items: center;
  gap: 3px;
  color: #333;
}
</style>
